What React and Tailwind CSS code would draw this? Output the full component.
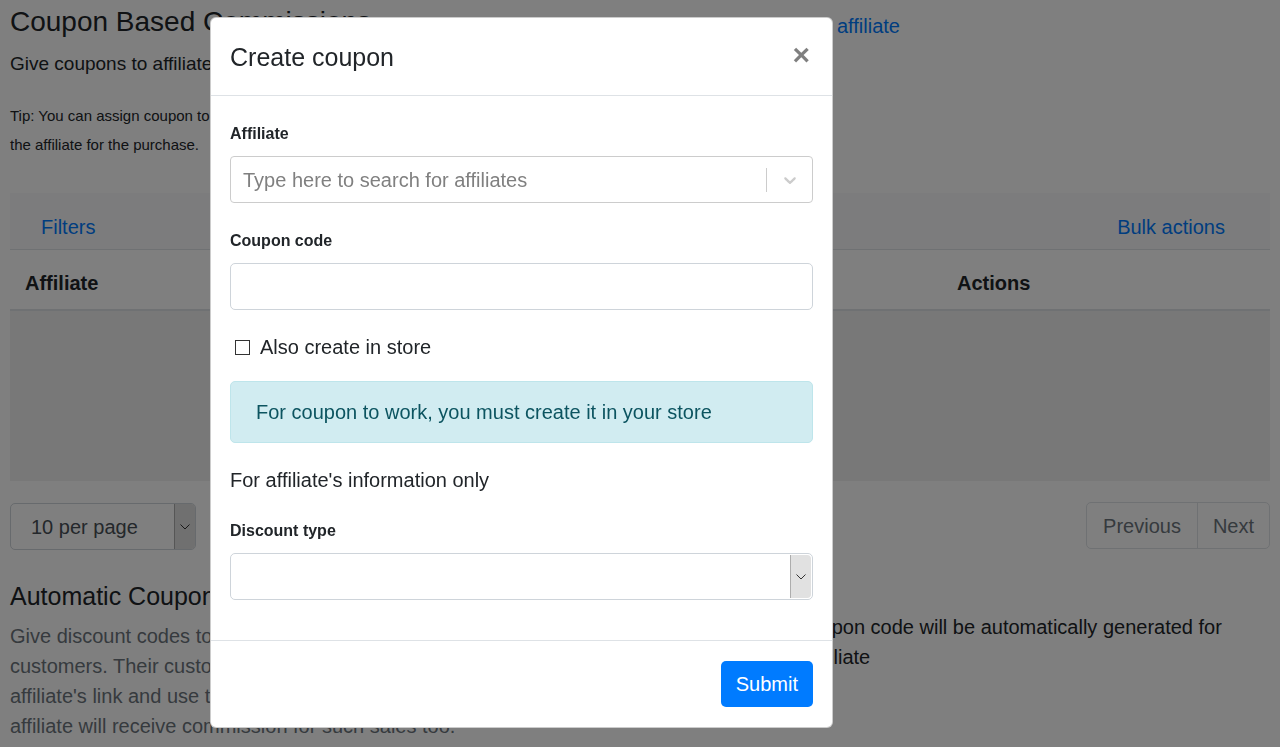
import React from 'react';

const font = { fontFamily: '"Liberation Sans", Arial, sans-serif' };

const Chevron = ({ className }) => (
  <svg viewBox="0 0 20 20" className={className} fill="currentColor">
    <path d="M4.516 7.548c0.436-0.446 1.043-0.481 1.576 0l3.908 3.747 3.908-3.747c0.533-0.481 1.141-0.446 1.574 0 0.436 0.445 0.408 1.197 0 1.615-0.406 0.418-4.695 4.502-4.695 4.502-0.217 0.223-0.502 0.335-0.787 0.335s-0.57-0.112-0.789-0.335c0 0-4.287-4.084-4.695-4.502s-0.436-1.17 0-1.615z" />
  </svg>
);

const ThinChevron = () => (
  <svg width="10" height="6" viewBox="0 0 10 6" fill="none" stroke="#333" strokeWidth="1">
    <path d="M0.5 0.5 L5 5 L9.5 0.5" />
  </svg>
);

// page behind the modal
const Page = () => (
  <div className="px-[10px] text-[#212529]">
    <div className="flex justify-between items-center w-[890px] h-[34px] mt-[5px]">
      <h3 className="text-[28px] leading-[34px]">Coupon Based Commissions</h3>
      <a className="text-[20px] leading-[26px] text-[#007bff] translate-y-[4px]">Assign coupon to affiliate</a>
    </div>
    <p className="text-[19px] leading-[27px] mt-[11px]">Give coupons to affiliates and track sales made with their coupons</p>
    <p className="text-[15px] leading-[29px] mt-[24px]">
      Tip: You can assign coupon to an affiliate even if it doesn't exist yet.
      <br />
      the affiliate for the purchase.
    </p>

    <div className="mt-[34px]">
      <div className="bg-[#f8f9fa] h-[57px] border-b border-[#dee2e6] flex justify-between items-center pt-[12px] pl-[31px] pr-[45px] text-[20px] text-[#007bff]">
        <a>Filters</a>
        <a>Bulk actions</a>
      </div>
      <div className="h-[61px] border-b-2 border-[#dee2e6] flex items-center pt-[6px] pl-[15px] text-[20px] font-bold">
        <div className="w-[932px]">Affiliate</div>
        <div>Actions</div>
      </div>
      <div className="h-[170px] bg-[#f0f0f0]"></div>
    </div>

    <div className="flex justify-between mt-[22px]">
      <div className="w-[186px] h-[47px] border border-[#ced4da] rounded-[5px] flex text-[20px] text-[#495057]">
        <div className="flex-1 flex items-center pl-[20px]">10 per page</div>
        <div className="w-[21px] bg-[#e1e1e1] border-l border-[#adadad] rounded-r-[4px] flex items-center justify-center">
          <ThinChevron />
        </div>
      </div>
      <div className="flex h-[47px] border border-[#dee2e6] rounded-[5px] text-[20px] text-[#6c757d] mt-[-1px]">
        <div className="px-[16px] flex items-center border-r border-[#dee2e6]">Previous</div>
        <div className="px-[15px] flex items-center">Next</div>
      </div>
    </div>

    <div className="grid grid-cols-[630px_1fr] mt-[31px]">
      <div>
        <h4 className="text-[25px] leading-[30px]">Automatic Coupons</h4>
        <p className="text-[20px] leading-[30px] text-[#6c757d] mt-[10px]">
          Give discount codes to your affiliates to share with their
          <br />
          customers. Their customers don't need to click the
          <br />
          affiliate's link and use the coupon at checkout. The
          <br />
          affiliate will receive commission for such sales too.
        </p>
      </div>
      <div className="pl-[76px] pt-[31px] text-[20px] leading-[30px]">
        A unique coupon code will be automatically generated for
        <br />
        each new affiliate
      </div>
    </div>
  </div>
);

const Label = ({ children, className = '' }) => (
  <label className={`block text-[16px] font-bold leading-[24px] ${className}`}>{children}</label>
);

const Modal = () => (
  <div className="fixed inset-0 bg-black/50">
    <div className="ml-[210px] mt-[17px] w-[623px] bg-white border border-black/20 rounded-[6px] text-[#212529] overflow-hidden">
      <div className="h-[78px] border-b border-[#dee2e6] flex items-center justify-between px-[19px]">
        <h5 className="text-[25px] leading-[37px] mt-[2px]">Create coupon</h5>
        <button className="text-[30px] font-bold leading-none text-black/50 mr-[3px] mt-[-4px]">×</button>
      </div>

      <div className="px-[19px] pt-[21px] pb-[20px] text-[20px]">
        <Label className="pt-[5px] mb-[10px]">Affiliate</Label>
        <div className="h-[47px] border border-[#cccccc] rounded-[4px] flex items-center">
          <div className="flex-1 pl-[12px] text-[#808080]">Type here to search for affiliates</div>
          <div className="w-px h-[24px] bg-[#cccccc]"></div>
          <div className="w-[45px] flex justify-center text-[#cccccc]">
            <Chevron className="w-[20px] h-[20px]" />
          </div>
        </div>

        <Label className="pt-[6px] mt-[20px] mb-[10px]">Coupon code</Label>
        <div className="h-[47px] border border-[#ced4da] rounded-[5px]"></div>

        <div className="flex items-center h-[34px] mt-[20px] pl-[5px]">
          <span className="w-[15px] h-[15px] border border-[#333] mr-[10px]"></span>
          <span className="leading-[30px]">Also create in store</span>
        </div>

        <div className="mt-[17px] bg-[#d1ecf1] border border-[#bee5eb] text-[#0c5460] rounded-[5px] px-[25px] py-[15px] leading-[30px]">
          For coupon to work, you must create it in your store
        </div>

        <p className="mt-[20px] pt-[2px] leading-[30px]">For affiliate's information only</p>

        <Label className="pt-[7px] mt-[17px] mb-[10px]">Discount type</Label>
        <div className="h-[47px] mb-[20px] border border-[#ced4da] rounded-[5px] flex justify-end p-px">
          <div className="w-[21px] bg-[#e1e1e1] border-l border-[#adadad] rounded-r-[4px] flex items-center justify-center">
            <ThinChevron />
          </div>
        </div>
      </div>

      <div className="border-t border-[#dee2e6] h-[87px] flex items-center justify-end px-[19px]">
        <button className="h-[46px] px-[15px] bg-[#007bff] text-white text-[20px] rounded-[5px]">Submit</button>
      </div>
    </div>
  </div>
);

export default function App() {
  return (
    <div className="relative h-[747px] overflow-hidden bg-white" style={font}>
      <Page />
      <Modal />
    </div>
  );
}
